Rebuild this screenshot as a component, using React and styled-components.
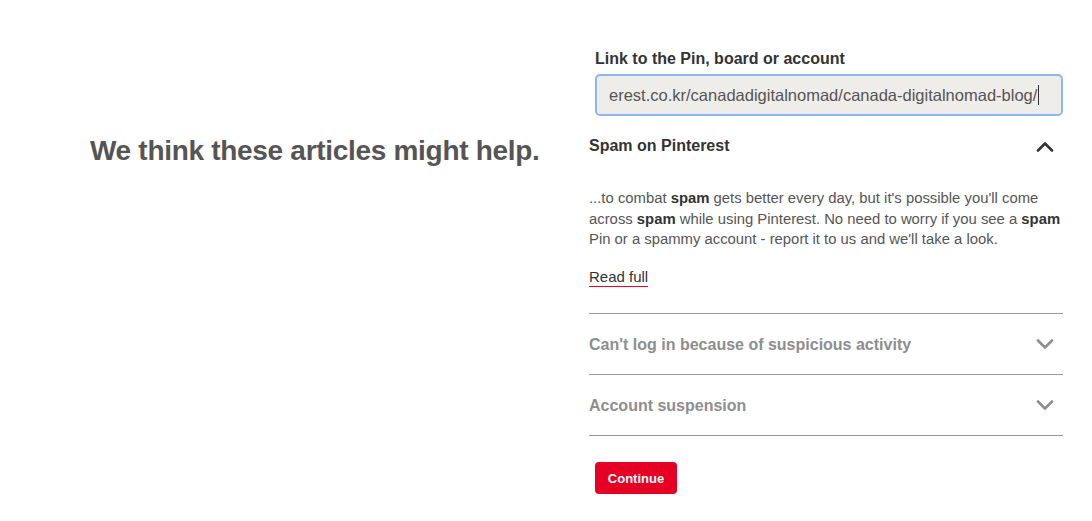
import React from "react";
import styled, { createGlobalStyle } from "styled-components";

const GlobalStyle = createGlobalStyle`
  html, body { margin: 0; padding: 0; background: #fff; }
  body { font-family: "Liberation Sans", Arial, sans-serif; -webkit-font-smoothing: antialiased; }
  * { box-sizing: border-box; }
`;

const Page = styled.div`
  display: flex;
  align-items: flex-start;
  padding: 0 29px 0 90px;
  gap: 48px;
  width: 1092px;
`;

const Intro = styled.div`
  flex: 1;
  padding-top: 133px;
`;

const Heading = styled.h1`
  margin: 0;
  font-size: 28px;
  line-height: 36px;
  font-weight: 700;
  color: #555;
  letter-spacing: -0.3px;
  white-space: nowrap;
`;

const Side = styled.div`
  width: 474px;
  padding-top: 49px;
  display: flex;
  flex-direction: column;
`;

const Field = styled.div`
  padding-left: 6px;
  display: flex;
  flex-direction: column;
  gap: 5px;
`;

const Label = styled.label`
  font-size: 16px;
  line-height: 20px;
  font-weight: 700;
  color: #333;
`;

const InputBox = styled.div`
  height: 42px;
  border: 2px solid #8db7f1;
  border-radius: 5px;
  background: #efedea;
  display: flex;
  align-items: center;
  padding: 0 12px;
  font-size: 16.5px;
  color: #555;
  white-space: nowrap;
  overflow: hidden;
`;

const Caret = styled.span`
  display: inline-block;
  width: 1px;
  height: 20px;
  background: #333;
  margin-left: 1px;
`;

const Item = styled.div`
  border-bottom: ${(p) => (p.$last ? "1px solid #999" : "none")};
  border-top: ${(p) => (p.$divided ? "1px solid #999" : "none")};
`;

const Header = styled.div`
  height: 60px;
  display: flex;
  align-items: center;
  justify-content: space-between;
  padding-right: 9px;
  padding-top: ${(p) => (p.$open ? "0" : "1px")};
`;

const Title = styled.div`
  font-size: 16px;
  font-weight: 700;
  color: ${(p) => (p.$open ? "#333" : "#8e8e8e")};
`;

const Body = styled.div`
  padding: 12px 0 26px;
  font-size: 14.85px;
  line-height: 20.5px;
  color: #555;
  white-space: nowrap;

  b { color: #333; font-weight: 700; }
`;

const ReadFull = styled.a`
  display: inline-block;
  margin-top: 18px;
  color: #333;
  text-decoration: none;
  line-height: 18px;
  border-bottom: 1px solid #e60023;
  font-size: 15px;
`;

const Button = styled.button`
  margin: 26px 0 0 6px;
  align-self: flex-start;
  width: 82px;
  height: 32px;
  border: none;
  border-radius: 4px;
  background: #e60023;
  color: #fff;
  font-family: inherit;
  font-size: 13px;
  font-weight: 700;
`;

const Chevron = ({ up, color }) => (
  <svg width="18" height="11" viewBox="0 0 18 11">
    <polyline
      points={up ? "2,9.5 9,2.5 16,9.5" : "2,1.5 9,8.5 16,1.5"}
      fill="none"
      stroke={color}
      strokeWidth="2.6"
      strokeLinecap="round"
      strokeLinejoin="round"
    />
  </svg>
);

export default function App() {
  return (
    <>
      <GlobalStyle />
      <Page>
        <Intro>
          <Heading>We think these articles might help.</Heading>
        </Intro>
        <Side>
          <Field>
            <Label>Link to the Pin, board or account</Label>
            <InputBox>
              erest.co.kr/canadadigitalnomad/canada-digitalnomad-blog/
              <Caret />
            </InputBox>
          </Field>
          <Item>
            <Header $open>
              <Title $open>Spam on Pinterest</Title>
              <Chevron up color="#333" />
            </Header>
            <Body>
              ...to combat <b>spam</b> gets better every day, but it's possible you'll come
              <br />
              across <b>spam</b> while using Pinterest. No need to worry if you see a <b>spam</b>
              <br />
              Pin or a spammy account - report it to us and we'll take a look.
              <br />
              <ReadFull href="#">Read full</ReadFull>
            </Body>
          </Item>
          <Item $divided>
            <Header>
              <Title>Can't log in because of suspicious activity</Title>
              <Chevron color="#8e8e8e" />
            </Header>
          </Item>
          <Item $divided $last>
            <Header>
              <Title>Account suspension</Title>
              <Chevron color="#8e8e8e" />
            </Header>
          </Item>
          <Button>Continue</Button>
        </Side>
      </Page>
    </>
  );
}
